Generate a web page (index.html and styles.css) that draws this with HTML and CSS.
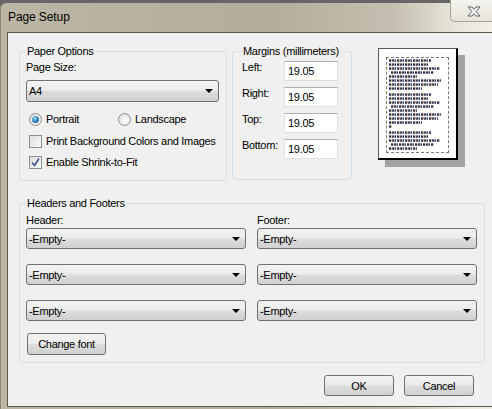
FILE: index.html
```html
<!DOCTYPE html>
<html lang="en">
<head>
    <meta charset="UTF-8">
    <title>Page Setup</title>
    <link rel="stylesheet" href="styles.css">
</head>
<body>
    <div class="window">
        <div class="titlebar">
            <span class="title">Page Setup</span>
            <div class="close">
                <svg width="14" height="11" viewBox="0 0 14 11">
                    <path d="M1 1h4l2 2.5L9 1h4L9 5.5l4 4.5H9L7 7.5 5 10H1l4-4.5z" fill="#fff" stroke="#5a5d66" stroke-width="1" stroke-linejoin="round"/>
                </svg>
            </div>
        </div>

        <div class="client">
            <div class="top-row">
                <fieldset class="group paper">
                    <legend>Paper Options</legend>
                    <div class="label">Page Size:</div>
                    <div class="combo size-combo"><span>A4</span><i class="arrow"></i></div>
                    <div class="choice-row">
                        <div class="choice portrait"><span class="radio on"></span>Portrait</div>
                        <div class="choice"><span class="radio"></span>Landscape</div>
                    </div>
                    <div class="choice-row check-one">
                        <div class="choice"><span class="check"></span>Print Background Colors and Images</div>
                    </div>
                    <div class="choice-row check-two">
                        <div class="choice">
                            <span class="check">
                                <svg width="11" height="11" viewBox="0 0 11 11"><path d="M2 5.5l2.5 3L9 1.5" fill="none" stroke="#3c4f8c" stroke-width="1.6"/></svg>
                            </span>Enable Shrink-to-Fit
                        </div>
                    </div>
                </fieldset>

                <fieldset class="group margins">
                    <legend>Margins (millimeters)</legend>
                    <div class="mrow"><span class="mlabel">Left:</span><span class="field">19.05</span></div>
                    <div class="mrow"><span class="mlabel">Right:</span><span class="field">19.05</span></div>
                    <div class="mrow"><span class="mlabel">Top:</span><span class="field">19.05</span></div>
                    <div class="mrow"><span class="mlabel">Bottom:</span><span class="field">19.05</span></div>
                </fieldset>

                <div class="preview">
                    <div class="sheet" id="sheet"></div>
                </div>
            </div>

            <fieldset class="group hf">
                <legend>Headers and Footers</legend>
                <div class="hf-grid">
                    <div class="hf-col">
                        <div class="label">Header:</div>
                        <div class="combo"><span>-Empty-</span><i class="arrow"></i></div>
                        <div class="combo"><span>-Empty-</span><i class="arrow"></i></div>
                        <div class="combo"><span>-Empty-</span><i class="arrow"></i></div>
                    </div>
                    <div class="hf-col">
                        <div class="label">Footer:</div>
                        <div class="combo"><span>-Empty-</span><i class="arrow"></i></div>
                        <div class="combo"><span>-Empty-</span><i class="arrow"></i></div>
                        <div class="combo"><span>-Empty-</span><i class="arrow"></i></div>
                    </div>
                </div>
                <div class="btn font-btn">Change font</div>
            </fieldset>

            <div class="actions">
                <div class="btn">OK</div>
                <div class="btn">Cancel</div>
            </div>
        </div>
    </div>

    <script>
        // fake text lines in the page preview
        const groups = [
            [[42, 0], [39, 0], [51, 0], [43, 2], [28, 0], [52, 0], [49, 0], [33, 0]],
            [[42, 0], [39, 0], [51, 0], [43, 2], [28, 0], [52, 0], [49, 0], [33, 0], [3, 0]],
            [[42, 0], [39, 0], [51, 0], [43, 2], [28, 0]]
        ];
        const sheet = document.getElementById('sheet');
        groups.forEach((lines, i) => {
            const block = document.createElement('div');
            block.className = 'block';
            lines.forEach(([w, indent]) => {
                const ln = document.createElement('div');
                ln.className = 'ln';
                ln.style.width = w + 'px';
                ln.style.marginLeft = indent + 'px';
                block.appendChild(ln);
            });
            sheet.appendChild(block);
        });
    </script>
</body>
</html>
```

FILE: styles.css
```css
* {
    box-sizing: border-box;
}

body {
    margin: 0;
    width: 492px;
    height: 409px;
    overflow: hidden;
    background: #66666a;
    font-family: 'Liberation Sans', Arial, sans-serif;
    font-size: 11px;
    letter-spacing: -0.3px;
    white-space: nowrap;
    color: #000;
}

.window {
    margin-top: 3px;
    height: 406px;
    padding: 0 0 2px 7px;
    border-top-left-radius: 6px;
    background: linear-gradient(90deg, #bab5a4, #b2ad9c 55%, #c4bfb0 80%, #e6e3d8 92%, #f2f0e9);
    box-shadow: inset 1px 0 #8c8878;
    display: flex;
    flex-direction: column;
}

.titlebar {
    height: 29px;
    display: flex;
    justify-content: space-between;
    align-items: center;
    padding-left: 1px;
}

.title {
    font-size: 12px;
    letter-spacing: -0.1px;
    margin-top: -1px;
}

.close {
    align-self: flex-start;
    margin-top: -3px;
    width: 42px;
    height: 22px;
    border-left: 1px solid #a7a496;
    border-bottom: 1px solid #a7a496;
    border-bottom-left-radius: 5px;
    background: linear-gradient(#f4f3ee, #e6e3da);
    display: flex;
    align-items: center;
    padding-left: 16px;
    padding-top: 2px;
}

.client {
    width: 485px;
    height: 375px;
    background: #f0f0f0;
    border: 1px solid #5a574e;
    border-right: none;
    padding: 11px 18px 0 11px;
}

.top-row {
    display: flex;
    align-items: flex-start;
}

.group {
    margin: 0;
    min-width: 0;
    border: 1px solid #d5dfe5;
    border-radius: 3px;
}

.group legend {
    padding: 0 1px;
    line-height: 14px;
}

.label {
    line-height: 14px;
}

.paper {
    width: 208px;
    padding: 2px 7px 10px 6px;
}

.combo {
    height: 21px;
    border: 1px solid #707070;
    border-radius: 3px;
    background: linear-gradient(#f3f3f3, #ebebeb 48%, #dddddd 52%, #d0d0d0);
    display: flex;
    align-items: center;
    justify-content: space-between;
    padding: 0 5px 0 2px;
}

.size-combo {
    height: 22px;
    margin-top: 6px;
}

.arrow {
    width: 0;
    height: 0;
    border-left: 4px solid transparent;
    border-right: 4px solid transparent;
    border-top: 4px solid #000;
}

.choice-row {
    display: flex;
    height: 16px;
    margin-top: 9px;
    padding-left: 3px;
}

.check-one {
    margin-top: 6px;
}

.check-two {
    margin-top: 5px;
}

.choice {
    display: flex;
    align-items: center;
    gap: 4px;
}

.portrait {
    width: 89px;
}

.radio {
    width: 13px;
    height: 13px;
    border-radius: 50%;
    border: 1px solid #8c8e8f;
    background: radial-gradient(circle at 60% 60%, #fdfdfd, #d8d8d8);
    display: flex;
    align-items: center;
    justify-content: center;
}

.radio.on::after {
    content: '';
    width: 7px;
    height: 7px;
    border-radius: 50%;
    background: radial-gradient(circle at 40% 35%, #9ddcf8, #2a7cbc 55%, #0f4578);
}

.check {
    width: 13px;
    height: 13px;
    border: 1px solid #8c8e8f;
    background: linear-gradient(135deg, #dcdcdc, #fbfbfb);
    display: flex;
    align-items: center;
    justify-content: center;
}

.margins {
    width: 120px;
    margin-left: 5px;
    padding: 3px 0 20px 9px;
}

.mrow {
    display: flex;
    height: 20px;
}

.mrow + .mrow {
    margin-top: 6px;
}

.mlabel {
    width: 42px;
    margin-top: -1px;
    line-height: 14px;
}

.field {
    width: 54px;
    height: 20px;
    border: 1px solid #dbdfe6;
    border-top-color: #abadb3;
    background: #fff;
    padding-left: 3px;
    line-height: 18px;
}

.preview {
    width: 80px;
    height: 112px;
    margin: 4px 0 0 26px;
    background: #fff;
    border: 1px solid #5a5a5a;
    border-right: 2px solid #000;
    border-bottom: 2px solid #000;
    box-shadow: 7px 7px 0 #a3a3a3;
    padding: 8px 0 0 7px;
}

.sheet {
    width: 63px;
    height: 96px;
    border: 1px dashed #7a7a7a;
    padding: 1px 0 0 2px;
    overflow: hidden;
}

.block {
    margin-bottom: 3px;
}

.ln {
    height: 3px;
    margin-bottom: 1px;
    background:
        linear-gradient(rgba(255, 255, 255, 0.35) 0 1px, transparent 1px 2px, rgba(255, 255, 255, 0.25) 2px),
        repeating-linear-gradient(90deg, #2a3060 0 2px, #d9b38a 2px 3px, #45454e 3px 5px, #8d95cf 5px 6px, #3b3b45 6px 7px, #fff 7px 8px);
}

.hf {
    width: 466px;
    margin-top: 15px;
    padding: 3px 7px 7px 6px;
}

.hf-grid {
    display: grid;
    grid-template-columns: 220px 220px;
    column-gap: 11px;
}

.hf-col .combo {
    margin-top: 15px;
}

.hf-col .label + .combo {
    margin-top: 1px;
}

.btn {
    width: 70px;
    height: 21px;
    border: 1px solid #707070;
    border-radius: 3px;
    background: linear-gradient(#f3f3f3, #ebebeb 48%, #dddddd 52%, #d0d0d0);
    display: flex;
    align-items: center;
    justify-content: center;
}

.font-btn {
    width: 79px;
    height: 22px;
    margin-top: 12px;
    margin-left: 1px;
}

.actions {
    display: flex;
    justify-content: flex-end;
    gap: 10px;
    margin-top: 12px;
}
```
